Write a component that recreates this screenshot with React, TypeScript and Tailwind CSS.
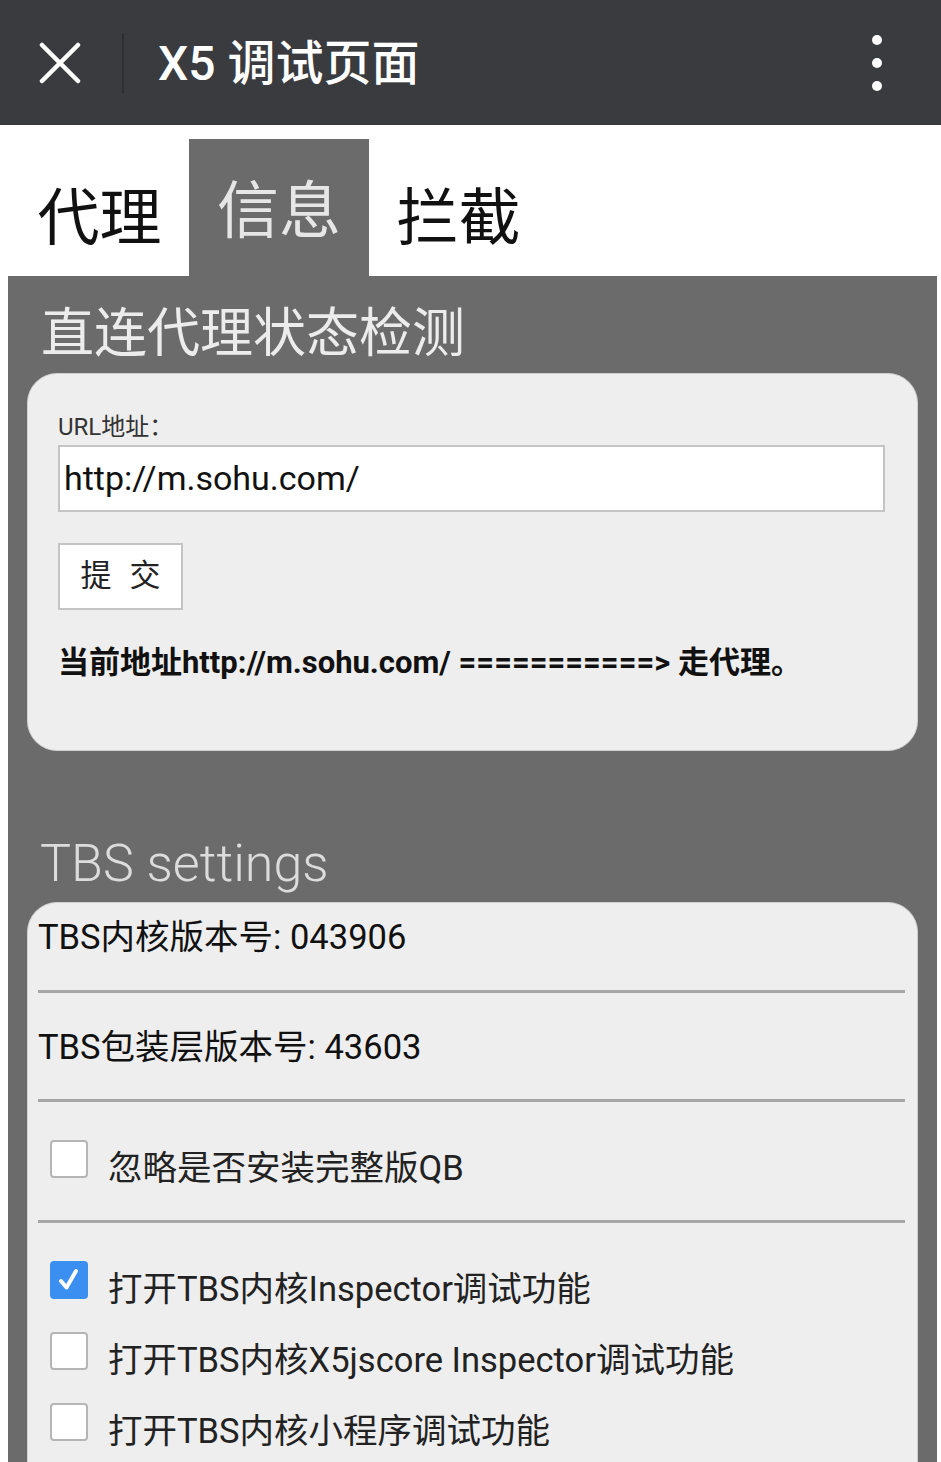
import React from "react";

function Checkbox({ checked }: { checked?: boolean }) {
  if (checked) {
    return (
      <div className="w-[38px] h-[38px] shrink-0 rounded-[4px] bg-[#3b8ff0] flex items-center justify-center">
        <svg width="28" height="28" viewBox="0 0 28 28">
          <path d="M6 15 L11.5 21.5 L21 5" stroke="white" strokeWidth="4" fill="none" strokeLinecap="round" strokeLinejoin="round" />
        </svg>
      </div>
    );
  }
  return <div className="w-[38px] h-[38px] shrink-0 rounded-[4px] bg-white border-2 border-[#b5b5b5]" />;
}

export default function App() {
  return (
    <div className="w-[941px] h-[1462px] overflow-hidden bg-white font-['Roboto','Noto_Sans_CJK_SC',sans-serif] text-[#111]">
      {/* Header */}
      <div className="h-[125px] bg-[#3a3b3f] flex items-center">
        <div className="w-[122px] flex items-center justify-center">
          <svg width="42" height="42" viewBox="0 0 42 42" className="ml-[-2px]">
            <path d="M3 3 L39 39 M39 3 L3 39" stroke="white" strokeWidth="4.5" strokeLinecap="round" />
          </svg>
        </div>
        <div className="w-[2px] h-[60px] bg-[#2e2f32]" />
        <div className="ml-[34px] mt-[2px] text-white text-[48px] font-medium leading-none">X5 调试页面</div>
        <div className="ml-auto mr-[59px] flex flex-col gap-[13px]">
          <div className="w-[10px] h-[10px] rounded-full bg-white" />
          <div className="w-[10px] h-[10px] rounded-full bg-white" />
          <div className="w-[10px] h-[10px] rounded-full bg-white" />
        </div>
      </div>

      <div className="pl-[8px] pr-[4px]">
        {/* Tabs */}
        <div className="flex pt-[14px] pl-[2px]">
          <div className="w-[179px] h-[137px] flex items-start justify-center pt-[49px] text-[62px] leading-none text-[#111]">代理</div>
          <div className="w-[180px] h-[137px] flex items-start justify-center pt-[42px] text-[62px] leading-none bg-[#6b6b6b] text-[#e6e6e6]">信息</div>
          <div className="w-[179px] h-[137px] flex items-start justify-center pt-[49px] text-[62px] leading-none text-[#111]">拦截</div>
        </div>

        {/* Panel */}
        <div className="bg-[#6b6b6b] px-[19px] pt-[32px] pb-[40px]">
          <div className="pl-[14px] text-[53px] leading-none text-[#ececec]">直连代理状态检测</div>

          <div className="mt-[12px] bg-[#eeeeee] rounded-[30px] border border-[#d0d0d0] pl-[30px] pr-[32px] pt-[38px] pb-[69px]">
            <div className="text-[24px] leading-[30px] text-[#333]">URL地址：</div>
            <div className="mt-[3px] h-[67px] bg-white border-2 border-[#c4c4c4] flex items-center pl-[4px] text-[34px] text-[#111]">http://m.sohu.com/</div>
            <div className="mt-[31px] w-[125px] h-[67px] bg-white border-2 border-[#c4c4c4] flex items-center justify-center gap-[18px] text-[31px] text-[#222]">
              <span>提</span>
              <span>交</span>
            </div>
            <div className="mt-[35px] text-[31px] leading-[36px] font-bold text-[#111]">当前地址http://m.sohu.com/ ===========&gt; 走代理。</div>
          </div>

          <div className="mt-[87px] pl-[13px] text-[52px] leading-none font-light text-[#dcdcdc]">TBS settings</div>

          <div className="mt-[12px] bg-[#eeeeee] rounded-t-[30px] border border-[#d0d0d0] pl-[10px] pr-[12px] pt-[14px] pb-[40px]">
            <div className="h-[73px] text-[34.5px] leading-[40px] flex items-start">TBS内核版本号: 043906</div>
            <div className="h-[3px] bg-[#a6a6a6]" />
            <div className="h-[106px] pt-[34px] text-[34.5px] leading-[40px]">TBS包装层版本号: 43603</div>
            <div className="h-[3px] bg-[#a6a6a6]" />
            <div className="h-[118px] pt-[38px] pl-[12px] flex items-start gap-[20px]">
              <Checkbox />
              <div className="text-[34.5px] leading-[40px] mt-[8px] text-[#222]">忽略是否安装完整版QB</div>
            </div>
            <div className="h-[3px] bg-[#a6a6a6]" />
            <div className="pt-[38px] pl-[12px] flex flex-col gap-[23px]">
              <div className="flex items-start gap-[20px]">
                <Checkbox checked />
                <div className="text-[34.5px] leading-[40px] mt-[8px] text-[#222]">打开TBS内核Inspector调试功能</div>
              </div>
              <div className="flex items-start gap-[20px]">
                <Checkbox />
                <div className="text-[34.5px] leading-[40px] mt-[8px] text-[#222]">打开TBS内核X5jscore Inspector调试功能</div>
              </div>
              <div className="flex items-start gap-[20px]">
                <Checkbox />
                <div className="text-[34.5px] leading-[40px] mt-[8px] text-[#222]">打开TBS内核小程序调试功能</div>
              </div>
            </div>
          </div>
        </div>
      </div>
    </div>
  );
}
